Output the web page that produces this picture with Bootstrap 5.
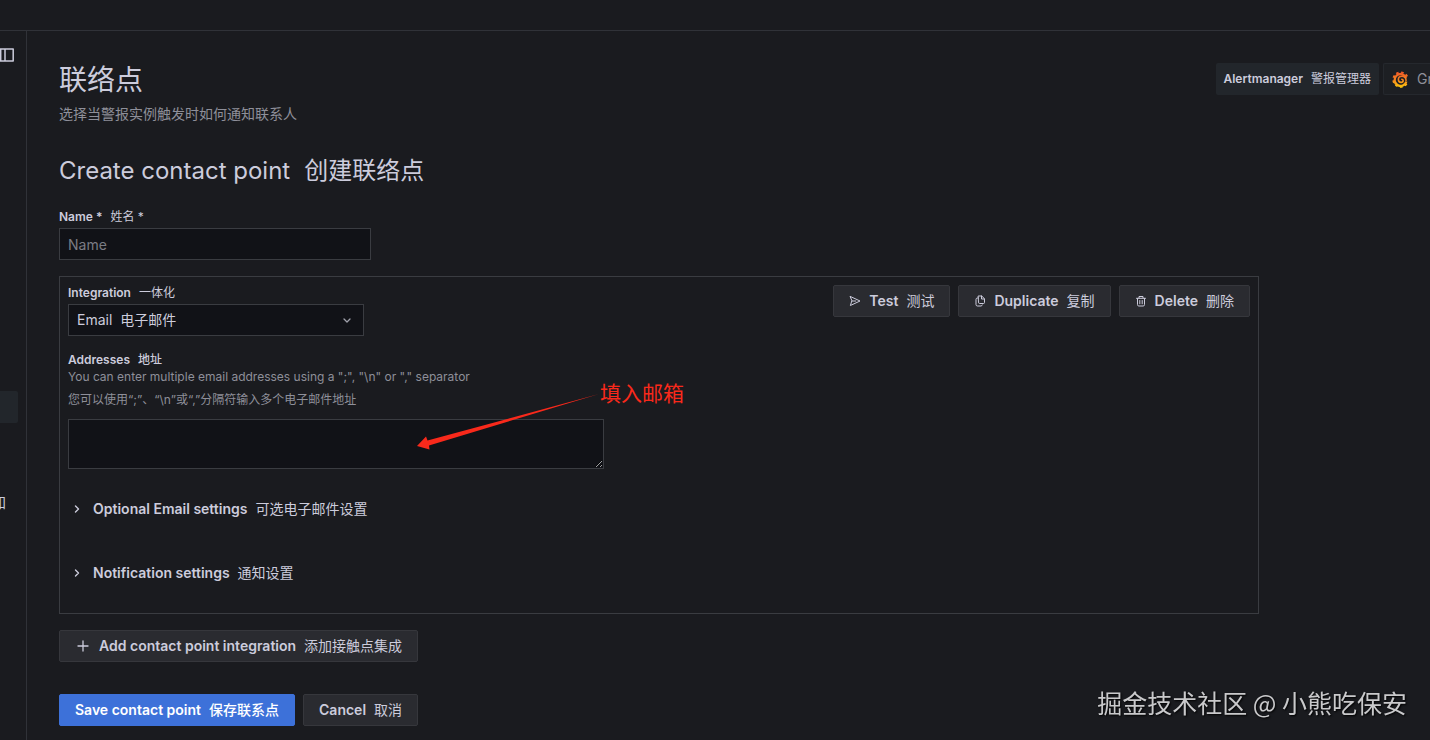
<!DOCTYPE html>
<html lang="zh-CN" data-bs-theme="dark">
<head>
<meta charset="utf-8">
<meta name="viewport" content="width=device-width, initial-scale=1">
<title>联络点</title>
<link rel="stylesheet" href="https://cdn.jsdelivr.net/npm/bootstrap@5.3.0/dist/css/bootstrap.min.css">
<style>
:root { --line: #303238; --panel-line: #3a3c41; --text: #ccccdc; --muted: #8e8f99; --field: #111217; --btn: #2a2b30; --chip: #22262b; }
body { font-family: Inter, "Noto Sans CJK SC", sans-serif; font-size: 14px; line-height: 22px; color: var(--text); background: #1a1b1f; }
.topbar { height: 31px; border-bottom: 1px solid var(--line); }
.shell { min-height: calc(100vh - 31px); }
.side { width: 27px; border-right: 1px solid var(--line); }
.side a { color: var(--text); text-decoration: none; }
.side-toggle { height: 14px; margin-top: 17px; line-height: 0; }
.side-current { width: 18px; height: 32px; margin-top: 329px; background: var(--chip); border-radius: 0 2px 2px 0; }
.side-item { width: 6px; margin-top: 69px; font-size: 14px; }
.page { padding: 32px 0 14px 32px; min-width: 0; }
h1, h2 { color: var(--text); font-weight: 400; }
h1 { font-size: 28px; line-height: 34px; margin-bottom: 6px; }
h2 { font-size: 24px; line-height: 28px; margin: 32px 0 24px; column-gap: 14px; }
.muted { color: var(--muted); }
.chip { height: 32px; background: var(--chip); border-radius: 2px; padding: 0 8px; font-size: 12px; font-weight: 600; }
.picker { width: 47px; height: 32px; padding: 0 8px; border: 1px solid #25282d; border-right: 0; background: #1d1f23; color: var(--muted); border-radius: 2px 0 0 2px; }
.field-label { font-size: 12px; line-height: 16px; font-weight: 600; margin-bottom: 3px; }
[lang="zh"] { font-weight: 400; }
.form-control, .form-select { height: 32px; padding: 0 8px; font-size: 14px; line-height: 22px; color: var(--text); background-color: var(--field); border-color: var(--panel-line); border-radius: 0; }
.form-control::placeholder { color: #7b7c84; }
.name-box { max-width: 312px; }
.type-box { max-width: 296px; background-position: right 10px center; background-size: 12px;
  background-image: url("data:image/svg+xml,%3Csvg xmlns='http://www.w3.org/2000/svg' viewBox='0 0 12 12'%3E%3Cpath fill='none' stroke='%23a0a1ab' stroke-width='1.3' stroke-linecap='round' stroke-linejoin='round' d='M3 5l3 3 3-3'/%3E%3C/svg%3E"); }
.content { max-width: 1200px; margin-right: 32px; }
.panel { border: 1px solid var(--panel-line); padding: 8px 8px 24px; margin: 16px 0; }
.hint { font-size: 12px; line-height: 18px; }
.hint-zh { font-size: 12px; line-height: 28px; margin-bottom: 5px; }
.address { position: relative; max-width: 536px; }
.address textarea.form-control { height: 50px; min-height: 50px; }
.callout { position: absolute; left: 346px; top: -39px; color: #f9291b; pointer-events: none; }
.callout span { position: absolute; left: 186px; top: 0; font-size: 21px; line-height: 24px; white-space: nowrap; font-family: "Noto Sans CJK SC", sans-serif; }
.tool { height: 32px; padding: 0 15px; font-size: 14px; line-height: 22px; font-weight: 600; border-radius: 2px; color: var(--text); background: var(--btn); border: 1px solid #36373c; display: inline-flex; align-items: center; gap: 8px; white-space: nowrap; }
.tool-main { background: #3d71d9; border-color: #3d71d9; color: #fff; }
.fold { height: 32px; border: 0; padding: 0 2px; background: none; color: var(--text); font-weight: 600; gap: 8px; }
.fold svg { margin-right: 1px; }
.folds { margin-top: 24px; gap: 32px; }
.actions { margin-top: 32px; }
.credit { position: fixed; right: 23px; bottom: 22px; font: 400 25px/32px "Noto Sans CJK SC", sans-serif; color: #c9c9cb; text-shadow: 1px 1px 2px #000; }
svg { flex: none; }
.ico { fill: none; stroke: currentColor; stroke-linecap: round; stroke-linejoin: round; }
</style>
</head>
<body>
<header class="topbar"></header>
<div class="shell d-flex">
  <nav class="side flex-shrink-0 d-flex flex-column">
    <a href="#" class="side-toggle" aria-label="菜单"><svg width="14" height="14" viewBox="0 0 14 14" class="ico" stroke-width="1.5"><path d="M-1 1h14.200v12H-1M.7 1v12M5 1v12"/></svg></a>
    <a href="#" class="side-current" aria-label="联络点"></a>
    <a href="#" class="side-item d-flex justify-content-end overflow-hidden">知</a>
  </nav>
  <main class="page flex-grow-1 overflow-hidden">
    <div class="d-flex justify-content-between align-items-start">
      <div>
        <h1>联络点</h1>
        <p class="muted mb-0">选择当警报实例触发时如何通知联系人</p>
      </div>
      <div class="d-flex gap-1">
        <label class="chip d-flex align-items-center gap-2 text-nowrap" for="manager"><span>Alertmanager</span><span lang="zh">警报管理器</span></label>
        <button id="manager" type="button" class="picker d-flex align-items-center gap-2 overflow-hidden">
          <svg width="17" height="17" viewBox="0 0 16 16" fill="none" stroke="url(#sun)"><defs><linearGradient id="sun" gradientUnits="userSpaceOnUse" x1="0" y1="0" x2="0" y2="16"><stop offset="0" stop-color="#f0522a"/><stop offset=".5" stop-color="#f58220"/><stop offset="1" stop-color="#fbca0a"/></linearGradient></defs><path stroke-width="2.200" d="M13.300 6.500A5.600 5.600 0 1 0 13.500 9.800"/><path stroke-width="1.900" stroke-dasharray="2.400 2.300" d="M14.200 5.200A6.800 6.800 0 1 0 14.600 10"/><path stroke-width="1.500" stroke-linecap="round" d="M13.200 8.800C13.400 6.500 11.500 5 9.300 5 7.300 5 6 6.300 6 8c0 1.600 1.200 2.700 2.600 2.700 1.100 0 1.900-.7 1.900-1.700 0-.8-.6-1.300-1.300-1.300"/></svg><span>Grafana</span>
        </button>
      </div>
    </div>
    <form class="content">
      <h2 class="d-flex flex-wrap"><span>Create contact point</span><span lang="zh">创建联络点</span></h2>
      <label class="field-label d-flex gap-2" for="name"><span>Name *</span><span lang="zh">姓名 *</span></label>
      <input class="form-control name-box" id="name" placeholder="Name">
      <section class="panel">
        <div class="d-flex justify-content-between align-items-start">
          <div class="flex-grow-1">
            <label class="field-label d-flex gap-2" for="type"><span>Integration</span><span lang="zh">一体化</span></label>
            <select class="form-select type-box" id="type"><option>Email&nbsp; 电子邮件</option></select>
          </div>
          <div class="d-flex gap-2">
            <button type="button" class="tool"><svg width="12" height="12" viewBox="0 0 12 12" class="ico"><path d="M1.400 1.500L11 6l-9.600 4.500L2.800 6zM2.800 6h4"/></svg><span>Test</span><span lang="zh">测试</span></button>
            <button type="button" class="tool"><svg width="12" height="12" viewBox="0 0 12 12" class="ico"><path d="M4.500 1h3.200L10.500 3.800V7.500q0 1-1 1h-4q-1 0-1-1zM7.500 1v3h3M4.500 3h-1q-1.500 0-1.500 1.500v5q0 1.500 1.500 1.500H7q1 0 1.300-1"/></svg><span>Duplicate</span><span lang="zh">复制</span></button>
            <button type="button" class="tool"><svg width="12" height="12" viewBox="0 0 12 12" class="ico"><path d="M1.500 3.300h9M4 3V1.500h4V3M2.500 3.500v6q0 1.500 1.300 1.500h4.400q1.300 0 1.300-1.500v-6M4.800 5.500v3.300M7.200 5.500v3.300"/></svg><span>Delete</span><span lang="zh">删除</span></button>
          </div>
        </div>
        <label class="field-label d-flex gap-2 mt-3 mb-0" for="addresses"><span>Addresses</span><span class="fw-medium">地址</span></label>
        <div class="muted hint">You can enter multiple email addresses using a ";", "\n" or "," separator</div>
        <div class="muted hint-zh">您可以使用“;”、“\n”或“,”分隔符输入多个电子邮件地址</div>
        <div class="address">
          <textarea class="form-control" id="addresses"></textarea>
          <div class="callout">
            <svg class="d-block" width="190" height="70" viewBox="0 0 190 70"><path fill="currentColor" d="M3 66L12 56.500 13.500 60.500 185 14 15 65.500 15.500 69.500z"/></svg>
            <span>填入邮箱</span>
          </div>
        </div>
        <div class="folds d-flex flex-column align-items-start">
          <button type="button" class="fold d-flex align-items-center"><svg width="14" height="14" viewBox="0 0 14 14" class="ico" stroke-width="1.400"><path d="M5.500 4l3 3-3 3"/></svg><span>Optional Email settings</span><span lang="zh">可选电子邮件设置</span></button>
          <button type="button" class="fold d-flex align-items-center"><svg width="14" height="14" viewBox="0 0 14 14" class="ico" stroke-width="1.400"><path d="M5.500 4l3 3-3 3"/></svg><span>Notification settings</span><span lang="zh">通知设置</span></button>
        </div>
      </section>
      <button type="button" class="tool"><svg width="16" height="16" viewBox="0 0 16 16" class="ico" stroke-width="1.300"><path d="M8 3v10M3 8h10"/></svg><span>Add contact point integration</span><span lang="zh">添加接触点集成</span></button>
      <div class="actions d-flex gap-2">
        <button type="submit" class="tool tool-main"><span>Save contact point</span><span class="fw-medium">保存联系点</span></button>
        <button type="button" class="tool"><span>Cancel</span><span lang="zh">取消</span></button>
      </div>
    </form>
  </main>
</div>
<div class="credit">掘金技术社区 @ 小熊吃保安</div>
<script src="https://cdn.jsdelivr.net/npm/bootstrap@5.3.0/dist/js/bootstrap.bundle.min.js"></script>
</body>
</html>
